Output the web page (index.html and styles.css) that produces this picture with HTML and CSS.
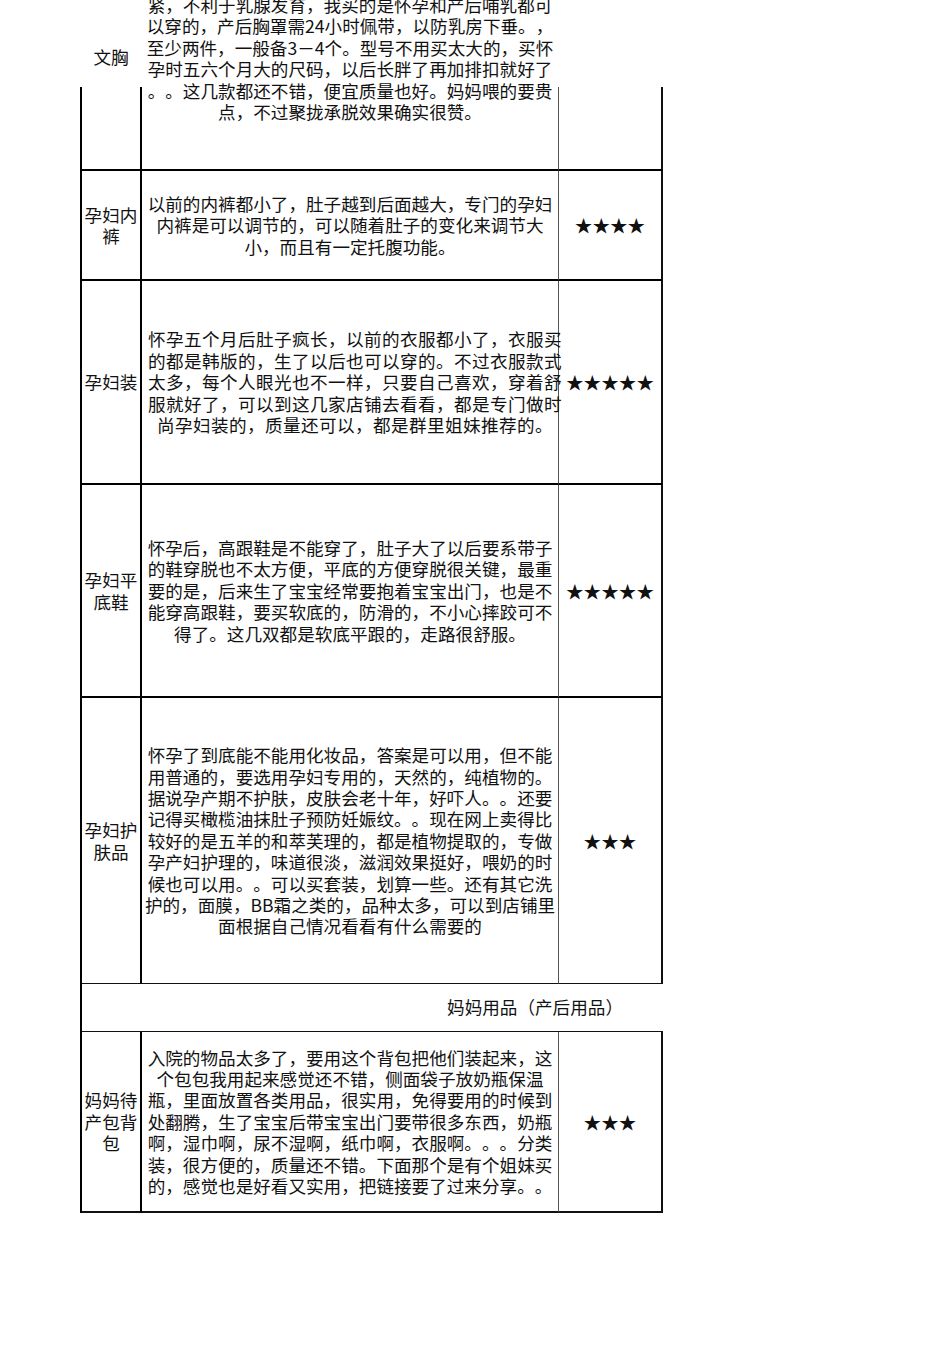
FILE: index.html
```html
<!DOCTYPE html>
<html lang="zh-CN">
<head>
<meta charset="utf-8">
<title>妈妈用品</title>
<link rel="stylesheet" href="styles.css">
</head>
<body>
<div class="sheet">
  <div class="row row-top">
    <div class="cell name"><div class="lift-name">文胸</div></div>
    <div class="cell desc"><div class="lift-desc">紧，不利于乳腺发育，我买的是怀孕和产后哺乳都可<br>以穿的，产后胸罩需24小时佩带，以防乳房下垂。，<br>至少两件，一般备3－4个。型号不用买太大的，买怀<br>孕时五六个月大的尺码，以后长胖了再加排扣就好了<br>。。这几款都还不错，便宜质量也好。妈妈喂的要贵<br>点，不过聚拢承脱效果确实很赞。</div></div>
    <div class="cell stars"></div>
  </div>

  <div class="row h110">
    <div class="cell name">孕妇内<br>裤</div>
    <div class="cell desc">以前的内裤都小了，肚子越到后面越大，专门的孕妇<br>内裤是可以调节的，可以随着肚子的变化来调节大<br>小，而且有一定托腹功能。</div>
    <div class="cell stars">★★★★</div>
  </div>

  <div class="row h204">
    <div class="cell name">孕妇装</div>
    <div class="cell desc wide">怀孕五个月后肚子疯长，以前的衣服都小了，衣服买<br>的都是韩版的，生了以后也可以穿的。不过衣服款式<br>太多，每个人眼光也不一样，只要自己喜欢，穿着舒<br>服就好了，可以到这几家店铺去看看，都是专门做时<br>尚孕妇装的，质量还可以，都是群里姐妹推荐的。</div>
    <div class="cell stars">★★★★★</div>
  </div>

  <div class="row h213">
    <div class="cell name">孕妇平<br>底鞋</div>
    <div class="cell desc">怀孕后，高跟鞋是不能穿了，肚子大了以后要系带子<br>的鞋穿脱也不太方便，平底的方便穿脱很关键，最重<br>要的是，后来生了宝宝经常要抱着宝宝出门，也是不<br>能穿高跟鞋，要买软底的，防滑的，不小心摔跤可不<br>得了。这几双都是软底平跟的，走路很舒服。</div>
    <div class="cell stars">★★★★★</div>
  </div>

  <div class="row h286 thin-bottom">
    <div class="cell name">孕妇护<br>肤品</div>
    <div class="cell desc">怀孕了到底能不能用化妆品，答案是可以用，但不能<br>用普通的，要选用孕妇专用的，天然的，纯植物的。<br>据说孕产期不护肤，皮肤会老十年，好吓人。。还要<br>记得买橄榄油抹肚子预防妊娠纹。。现在网上卖得比<br>较好的是五羊的和萃芙理的，都是植物提取的，专做<br>孕产妇护理的，味道很淡，滋润效果挺好，喂奶的时<br>候也可以用。。可以买套装，划算一些。还有其它洗<br>护的，面膜，BB霜之类的，品种太多，可以到店铺里<br>面根据自己情况看看有什么需要的</div>
    <div class="cell stars">★★★</div>
  </div>

  <div class="section">妈妈用品（产后用品）</div>

  <div class="row h181 last">
    <div class="cell name">妈妈待<br>产包背<br>包</div>
    <div class="cell desc">入院的物品太多了，要用这个背包把他们装起来，这<br>个包包我用起来感觉还不错，侧面袋子放奶瓶保温<br>瓶，里面放置各类用品，很实用，免得要用的时候到<br>处翻腾，生了宝宝后带宝宝出门要带很多东西，奶瓶<br>啊，湿巾啊，尿不湿啊，纸巾啊，衣服啊。。。分类<br>装，很方便的，质量还不错。下面那个是有个姐妹买<br>的，感觉也是好看又实用，把链接要了过来分享。。</div>
    <div class="cell stars">★★★</div>
  </div>
</div>
</body>
</html>
```

FILE: styles.css
```css
html, body {
  margin: 0;
  padding: 0;
  background: #ffffff;
}

body {
  font-family: "Noto Sans CJK SC", "Liberation Serif", serif;
  font-size: 17.6px;
  line-height: 21.4px;
  color: #111111;
  text-spacing-trim: space-all;
  font-kerning: none;
}

.sheet {
  margin-left: 80px;
  margin-top: 87px;
  width: 583px;
  border-left: 2px solid #000000;
  box-sizing: border-box;
}

.row {
  display: grid;
  grid-template-columns: 60px 417px 104px;
  box-sizing: border-box;
}

.cell {
  box-sizing: border-box;
  display: flex;
  align-items: center;
  justify-content: center;
  text-align: center;
  border-bottom: 2px solid #000000;
  white-space: nowrap;
}

.name {
  border-right: 2px solid #000000;
}

.desc {
  border-right: 1px solid #555555;
}

.stars {
  border-right: 2px solid #111111;
}

.wide {
  letter-spacing: 0.4px;
  padding-left: 10px;
}

.row-top {
  height: 84px;
}

.row-top .cell {
  align-items: flex-start;
}

.lift-name {
  margin-top: -41px;
}

.lift-desc {
  margin-top: -93px;
}

.h110 { height: 110px; }
.h204 { height: 204px; }
.h213 { height: 213px; }
.h286 { height: 286px; }
.h181 { height: 181px; }

.thin-bottom .cell {
  border-bottom: 1px solid #111111;
}

.section {
  height: 48px;
  box-sizing: border-box;
  border-bottom: 1px solid #111111;
  display: flex;
  align-items: center;
  justify-content: flex-end;
  padding-right: 40px;
  padding-bottom: 1px;
}

.last .cell {
  border-bottom: 2px solid #111111;
}
```
